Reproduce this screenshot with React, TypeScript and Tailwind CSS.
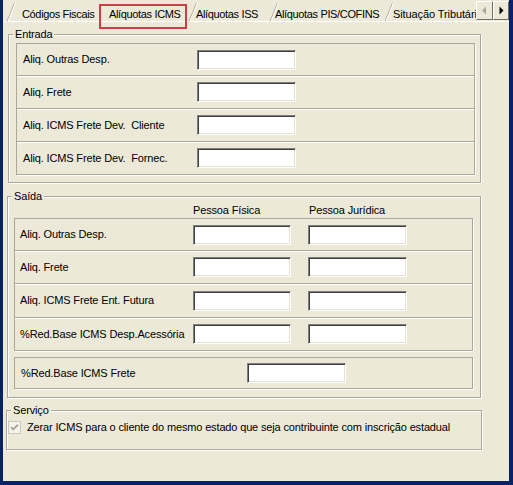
import React from "react";

const Diag = () => (
  <svg width="10" height="22" viewBox="0 0 10 22" className="shrink-0">
    <line x1="1" y1="21.5" x2="8.5" y2="3" stroke="#aca899" strokeWidth="1" />
    <line x1="2" y1="21.5" x2="9.5" y2="3" stroke="#ffffff" strokeWidth="1" />
  </svg>
);

const Field = ({ cls }: { cls: string }) => (
  <div
    className={
      "h-[20px] shrink-0 bg-white border border-t-[#7f7f7f] border-l-[#7f7f7f] border-r-white border-b-white shadow-[inset_1px_1px_0_#404040,inset_-1px_-1px_0_#e4e1d2] " +
      cls
    }
  />
);

const Row = ({
  label,
  h,
  last,
  children,
  pl,
}: {
  label: string;
  h: string;
  last?: boolean;
  children: React.ReactNode;
  pl: string;
}) => (
  <div
    className={
      "flex items-center " +
      h +
      " " +
      pl +
      (last ? "" : " border-b border-b-[#aca899] shadow-[0_1px_0_#ffffff]")
    }
  >
    <div className="w-[174px] shrink-0 whitespace-pre">{label}</div>
    {children}
  </div>
);

export default function App() {
  return (
    <div className="w-[513px] h-[485px] bg-[#0b2165] pl-[3px] pr-[4px] pb-[4px] font-['Liberation_Sans',Arial,sans-serif] text-[11px] leading-[13px] tracking-[-0.15px] text-black">
      <div className="h-full bg-[#ece9d8] flex flex-col overflow-hidden">
        {/* Tab strip */}
        <div className="h-[22px] flex shrink-0 border-b border-b-white tracking-[-0.35px]">
          <div className="w-[95px] flex items-start shrink-0">
            <div className="pl-[3px] flex">
              <Diag />
            </div>
            <span className="pl-[6px] pt-[8px] whitespace-nowrap">Códigos Fiscais</span>
          </div>
          <div className="w-[90px] relative flex items-start shrink-0">
            <span className="pl-[11px] pt-[8px] whitespace-nowrap">Alíquotas ICMS</span>
            <span className="absolute left-[1px] right-[1px] top-[4px] h-[25px] border-2 border-[#d33a47] pointer-events-none" />
          </div>
          <div className="w-[81px] flex items-start shrink-0">
            <Diag />
            <span className="-ml-[2px] pt-[8px] whitespace-nowrap">Alíquotas ISS</span>
          </div>
          <div className="w-[115px] flex items-start shrink-0">
            <Diag />
            <span className="-ml-[4px] pt-[8px] whitespace-nowrap">Alíquotas PIS/COFINS</span>
          </div>
          <div className="w-[92px] flex items-start shrink-0 overflow-hidden">
            <Diag />
            <span className="-ml-[1px] pt-[8px] whitespace-nowrap tracking-[-0.1px]">Situação Tributária</span>
          </div>
          <div className="flex pt-[1px] h-[20px]">
            <div className="w-[17px] h-[19px] border border-t-white border-l-white border-r-[#716f64] border-b-[#716f64] bg-[#ece9d8] flex items-center justify-center">
              <svg width="5" height="9" viewBox="0 0 5 9">
                <path d="M4 0.5 L0 4.5 L4 8.5 Z" fill="#aca899" />
              </svg>
            </div>
            <div className="w-[16px] h-[19px] border border-t-white border-l-white border-r-[#716f64] border-b-[#716f64] bg-[#ece9d8] flex items-center justify-center">
              <svg width="5" height="9" viewBox="0 0 5 9">
                <path d="M0.5 0.5 L4.5 4.5 L0.5 8.5 Z" fill="#000000" />
              </svg>
            </div>
          </div>
        </div>

        {/* Entrada */}
        <fieldset className="shrink-0 ml-[5px] mt-[6px] w-[473px] border border-[#aca899] shadow-[inset_1px_1px_0_#ffffff,1px_1px_0_#ffffff] pb-[7px]">
          <legend className="ml-[4px] px-[2px] bg-[#ece9d8] leading-[13px]">Entrada</legend>
          <div className="ml-[7px] mt-[2px] w-[459px] border border-[#aca899] shadow-[1px_1px_0_#ffffff]">
            <Row label="Aliq. Outras Desp." h="h-[32px]" pl="pl-[6px]">
              <Field cls="w-[99px]" />
            </Row>
            <Row label="Aliq. Frete" h="h-[33px]" pl="pl-[6px]">
              <Field cls="w-[99px]" />
            </Row>
            <Row label="Aliq. ICMS Frete Dev.  Cliente" h="h-[33px]" pl="pl-[6px]">
              <Field cls="w-[99px]" />
            </Row>
            <Row label="Aliq. ICMS Frete Dev.  Fornec." h="h-[32px]" pl="pl-[6px]" last>
              <Field cls="w-[99px]" />
            </Row>
          </div>
        </fieldset>

        {/* Saída */}
        <fieldset className="shrink-0 ml-[4px] mt-[7px] w-[474px] border border-[#aca899] shadow-[inset_1px_1px_0_#ffffff,1px_1px_0_#ffffff] pb-[8px]">
          <legend className="ml-[4px] px-[2px] bg-[#ece9d8] leading-[13px]">Saída</legend>
          <div className="h-[15px] flex items-center pl-[185px]">
            <span className="w-[116px]">Pessoa Física</span>
            <span>Pessoa Jurídica</span>
          </div>
          <div className="ml-[6px] w-[459px] border border-[#aca899] shadow-[1px_1px_0_#ffffff]">
            <Row label="Aliq. Outras Desp." h="h-[32px]" pl="pl-[5px]">
              <Field cls="w-[98px] -ml-[1px]" />
              <Field cls="w-[99px] ml-[17px]" />
            </Row>
            <Row label="Aliq. Frete" h="h-[33px]" pl="pl-[5px]">
              <Field cls="w-[98px] -ml-[1px]" />
              <Field cls="w-[99px] ml-[17px]" />
            </Row>
            <Row label="Aliq. ICMS Frete Ent. Futura" h="h-[34px]" pl="pl-[5px]">
              <Field cls="w-[98px] -ml-[1px]" />
              <Field cls="w-[99px] ml-[17px]" />
            </Row>
            <Row label="%Red.Base ICMS Desp.Acessória" h="h-[32px]" pl="pl-[5px]" last>
              <Field cls="w-[98px] -ml-[1px]" />
              <Field cls="w-[99px] ml-[17px]" />
            </Row>
          </div>
          <div className="ml-[6px] mt-[6px] w-[459px] h-[32px] border border-[#aca899] shadow-[1px_1px_0_#ffffff] flex items-center pl-[6px]">
            <div className="w-[226px] shrink-0 whitespace-nowrap">%Red.Base ICMS Frete</div>
            <Field cls="w-[99px]" />
          </div>
        </fieldset>

        {/* Serviço */}
        <fieldset className="shrink-0 ml-[3px] mt-[6px] w-[476px] pb-[15px] border border-[#aca899] shadow-[inset_1px_1px_0_#ffffff,1px_1px_0_#ffffff]">
          <legend className="ml-[4px] px-[2px] bg-[#ece9d8] leading-[13px]">Serviço</legend>
          <div className="flex items-center pt-[4px] pl-[1px]">
            <svg width="13" height="13" viewBox="0 0 13 13" className="shrink-0">
              <rect x="0.5" y="0.5" width="12" height="12" fill="#f4f3ee" stroke="#cac8bb" />
              <path d="M3 6 L5.2 8.4 L10 3.6" fill="none" stroke="#a8a596" strokeWidth="1.8" />
            </svg>
            <span className="pl-[6px] whitespace-nowrap">
              Zerar ICMS para o cliente do mesmo estado que seja contribuinte com inscrição estadual
            </span>
          </div>
        </fieldset>
      </div>
    </div>
  );
}
